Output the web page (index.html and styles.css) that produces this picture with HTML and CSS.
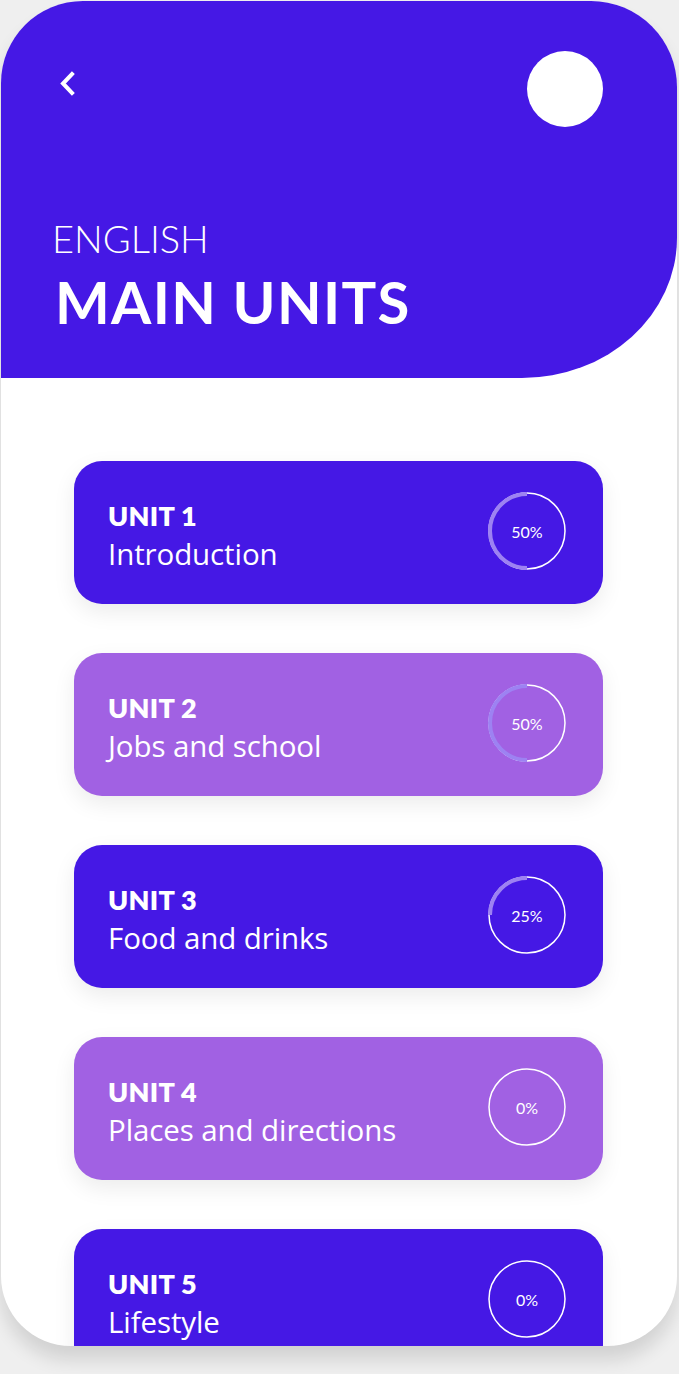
FILE: index.html
```html
<!DOCTYPE html>
<html lang="en">
<head>
    <meta charset="UTF-8">
    <meta name="viewport" content="width=device-width, initial-scale=1.0">
    <title>Main Units</title>
    <link rel="stylesheet" href="styles.css">
</head>
<body>

    <div class="phone">
        <header class="header">
            <div class="top-bar">
                <button class="back-button" aria-label="Back">
                    <svg width="20" height="26" viewBox="0 0 20 26">
                        <path d="M14 3 L5 12.5 L14 22" fill="none" stroke="#fff" stroke-width="4" stroke-linecap="square"/>
                    </svg>
                </button>
                <div class="avatar"></div>
            </div>
            <p class="subject">ENGLISH</p>
            <h1 class="title">MAIN UNITS</h1>
        </header>

        <main class="unit-list">
            <div class="unit-card dark">
                <div class="unit-text">
                    <h2 class="unit-number">UNIT 1</h2>
                    <p class="unit-name">Introduction</p>
                </div>
                <div class="progress">
                    <svg width="80" height="80" viewBox="0 0 80 80">
                        <circle cx="40" cy="40" r="38" class="ring"/>
                        <path d="M40 3 A37 37 0 0 0 40 77" class="arc"/>
                    </svg>
                    <span class="percent">50%</span>
                </div>
            </div>

            <div class="unit-card light">
                <div class="unit-text">
                    <h2 class="unit-number">UNIT 2</h2>
                    <p class="unit-name">Jobs and school</p>
                </div>
                <div class="progress">
                    <svg width="80" height="80" viewBox="0 0 80 80">
                        <circle cx="40" cy="40" r="38" class="ring"/>
                        <path d="M40 3 A37 37 0 0 0 40 77" class="arc"/>
                    </svg>
                    <span class="percent">50%</span>
                </div>
            </div>

            <div class="unit-card dark">
                <div class="unit-text">
                    <h2 class="unit-number">UNIT 3</h2>
                    <p class="unit-name">Food and drinks</p>
                </div>
                <div class="progress">
                    <svg width="80" height="80" viewBox="0 0 80 80">
                        <circle cx="40" cy="40" r="38" class="ring"/>
                        <path d="M40 3 A37 37 0 0 0 3 40" class="arc"/>
                    </svg>
                    <span class="percent">25%</span>
                </div>
            </div>

            <div class="unit-card light">
                <div class="unit-text">
                    <h2 class="unit-number">UNIT 4</h2>
                    <p class="unit-name">Places and directions</p>
                </div>
                <div class="progress">
                    <svg width="80" height="80" viewBox="0 0 80 80">
                        <circle cx="40" cy="40" r="38" class="ring"/>
                    </svg>
                    <span class="percent">0%</span>
                </div>
            </div>

            <div class="unit-card dark">
                <div class="unit-text">
                    <h2 class="unit-number">UNIT 5</h2>
                    <p class="unit-name">Lifestyle</p>
                </div>
                <div class="progress">
                    <svg width="80" height="80" viewBox="0 0 80 80">
                        <circle cx="40" cy="40" r="38" class="ring"/>
                    </svg>
                    <span class="percent">0%</span>
                </div>
            </div>
        </main>
    </div>

</body>
</html>
```

FILE: styles.css
```css
body {
    margin: 0;
    background-color: #efefef;
    font-family: Lato, "Open Sans", sans-serif;
    height: 1374px;
    overflow: hidden;
}
.phone {
    width: 676px;
    height: 1345px;
    margin: 1px 0 0 1px;
    background-color: #fff;
    border-radius: 82px 86px 70px 70px;
    overflow: hidden;
    box-shadow: 0 14px 18px rgba(0, 0, 0, 0.12);
}
.header {
    height: 377px;
    box-sizing: border-box;
    padding: 50px 74px 0 51px;
    background-color: #4518e5;
    border-bottom-right-radius: 155px 140px;
    color: #fff;
}
.top-bar {
    display: flex;
    justify-content: space-between;
    align-items: flex-start;
    height: 76px;
}
.back-button {
    margin: 20px 0 0 6px;
    padding: 0;
    background: none;
    border: none;
    cursor: pointer;
}
.avatar {
    width: 76px;
    height: 76px;
    border-radius: 50%;
    background-color: #fff;
}
.subject {
    margin: 89px 0 0 0;
    font-size: 38px;
    font-weight: 300;
    line-height: 44px;
}
.title {
    margin: 10px 0 0 3px;
    font-size: 58px;
    font-weight: 700;
    line-height: 64px;
    letter-spacing: 1.3px;
}
.unit-list {
    display: flex;
    flex-direction: column;
    gap: 49px;
    padding: 83px 74px 0 73px;
}
.unit-card {
    display: flex;
    justify-content: space-between;
    align-items: center;
    flex-shrink: 0;
    height: 143px;
    padding: 0 36px 0 34px;
    border-radius: 28px;
    color: #fff;
    box-shadow: 0 8px 22px rgba(0, 0, 0, 0.08);
}
.unit-card.dark {
    background-color: #4518e5;
}
.unit-card.light {
    background-color: #a161e3;
}
.unit-text {
    margin-top: 10px;
}
.unit-number {
    margin: 0;
    font-size: 27px;
    font-weight: 800;
    line-height: 32px;
    letter-spacing: 0.3px;
}
.unit-name {
    margin: 0;
    font-family: "Open Sans", sans-serif;
    font-size: 29.5px;
    font-weight: 400;
    line-height: 44px;
    letter-spacing: -0.1px;
}
.progress {
    position: relative;
    width: 80px;
    height: 80px;
    margin-bottom: 3px;
}
.progress svg {
    display: block;
}
.ring {
    fill: none;
    stroke: #fff;
    stroke-width: 1.5;
}
.arc {
    fill: none;
    stroke: #9d82f2;
    stroke-width: 4;
}
.percent {
    position: absolute;
    inset: 0;
    display: flex;
    align-items: center;
    justify-content: center;
    font-size: 16px;
}
```
